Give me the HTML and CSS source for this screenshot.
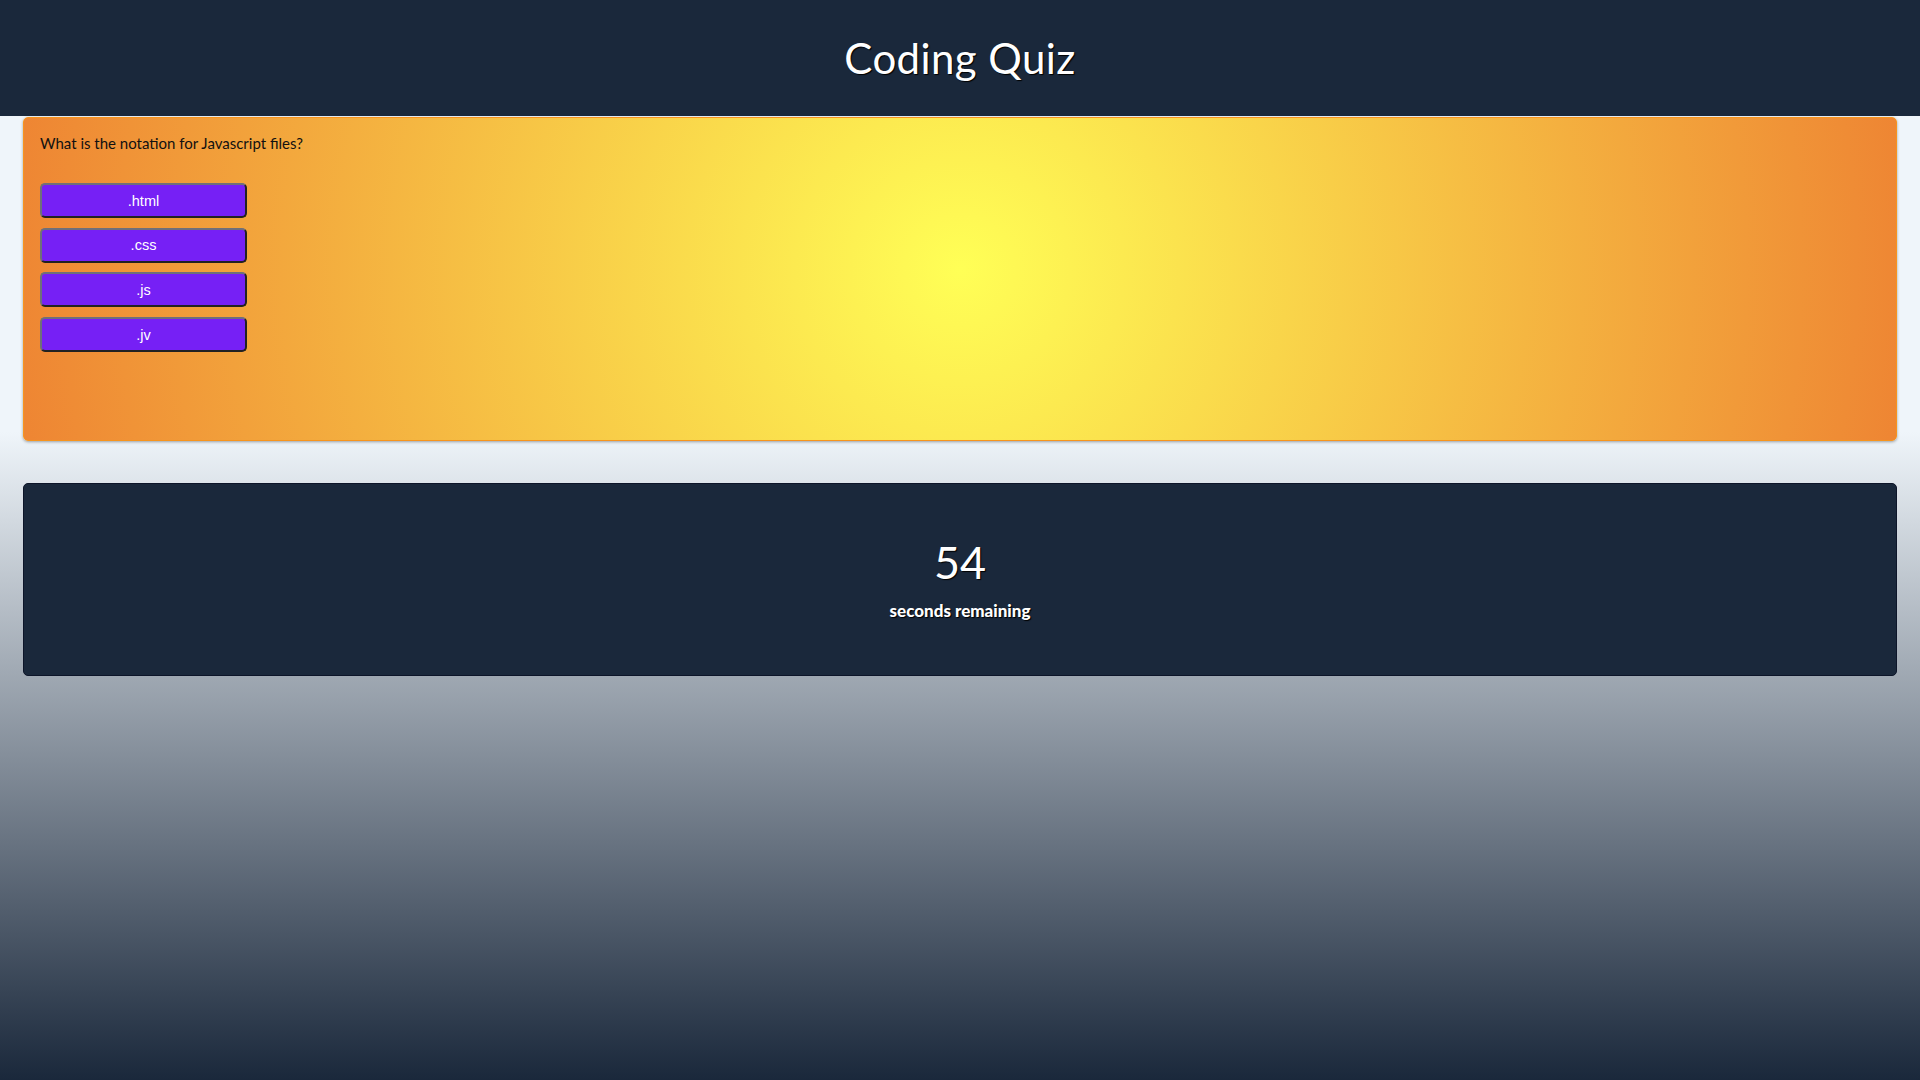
FILE: index.html
```html
<!DOCTYPE html>
<html lang="en">
<head>
<meta charset="utf-8">
<title>Coding Quiz</title>
<link rel="stylesheet" href="styles.css">
</head>
<body>
<header class="site-header">
  <h1 class="site-title">Coding Quiz</h1>
</header>
<main class="content">
  <section class="quiz-card">
    <p class="question">What is the notation for Javascript files?</p>
    <div class="answers">
      <button class="answer">.html</button>
      <button class="answer">.css</button>
      <button class="answer">.js</button>
      <button class="answer">.jv</button>
    </div>
  </section>
  <section class="timer-card">
    <div class="timer-count">54</div>
    <div class="timer-label">seconds remaining</div>
  </section>
</main>
</body>
</html>
```
FILE: styles.css
```css
html, body {
  margin: 0;
  padding: 0;
  min-height: 100%;
}
html {
  height: 100%;
}
body {
  min-height: 100vh;
  font-family: Lato, "Open Sans", "DejaVu Sans", sans-serif;
  background: linear-gradient(to bottom, #eff5fa 0%, #eff5fa 40%, #1a283b 100%);
  background-attachment: fixed;
}
.site-header {
  height: 116px;
  background: #1a283b;
  display: flex;
  align-items: center;
  justify-content: center;
}
.site-title {
  margin: 0;
  color: #fff;
  font-weight: 400;
  font-size: 42px;
  letter-spacing: 0.4px;
  text-shadow: 1px 1px 1px #000;
}
.content {
  padding: 1px 23px 0;
}
.quiz-card {
  box-sizing: border-box;
  height: 324px;
  padding: 16px;
  border: 1px solid #f7941d;
  border-radius: 5px;
  background: radial-gradient(circle at 50% 47%, #ffff56 0%, #ee8533 100%);
  box-shadow: 0 1px 3px rgba(0, 0, 0, 0.35);
}
.question {
  margin: 0;
  font-size: 15px;
  line-height: 18px;
  color: #111;
}
.answers {
  margin-top: 31px;
  display: flex;
  flex-direction: column;
  gap: 9.7px;
}
.answer {
  box-sizing: border-box;
  width: 207px;
  height: 35px;
  padding: 0;
  background: #7620f5;
  color: #fff;
  font-family: "Liberation Sans", Arial, sans-serif;
  font-size: 14.5px;
  border: 2px solid;
  border-color: #6f6f7a #222 #222 #6f6f7a;
  border-radius: 5px;
  cursor: pointer;
}
.timer-card {
  margin-top: 42px;
  box-sizing: border-box;
  height: 193px;
  padding-top: 50px;
  background: #1a283b;
  border: 1px solid #0d1529;
  border-radius: 5px;
  text-align: center;
  color: #fff;
}
.timer-count {
  font-size: 45px;
  line-height: 56px;
  text-shadow: 1px 1px 1px #000;
}
.timer-label {
  margin-top: 12px;
  font-size: 17px;
  line-height: 18px;
  font-weight: 900;
  text-shadow: 1px 1px 1px #000;
}
```
